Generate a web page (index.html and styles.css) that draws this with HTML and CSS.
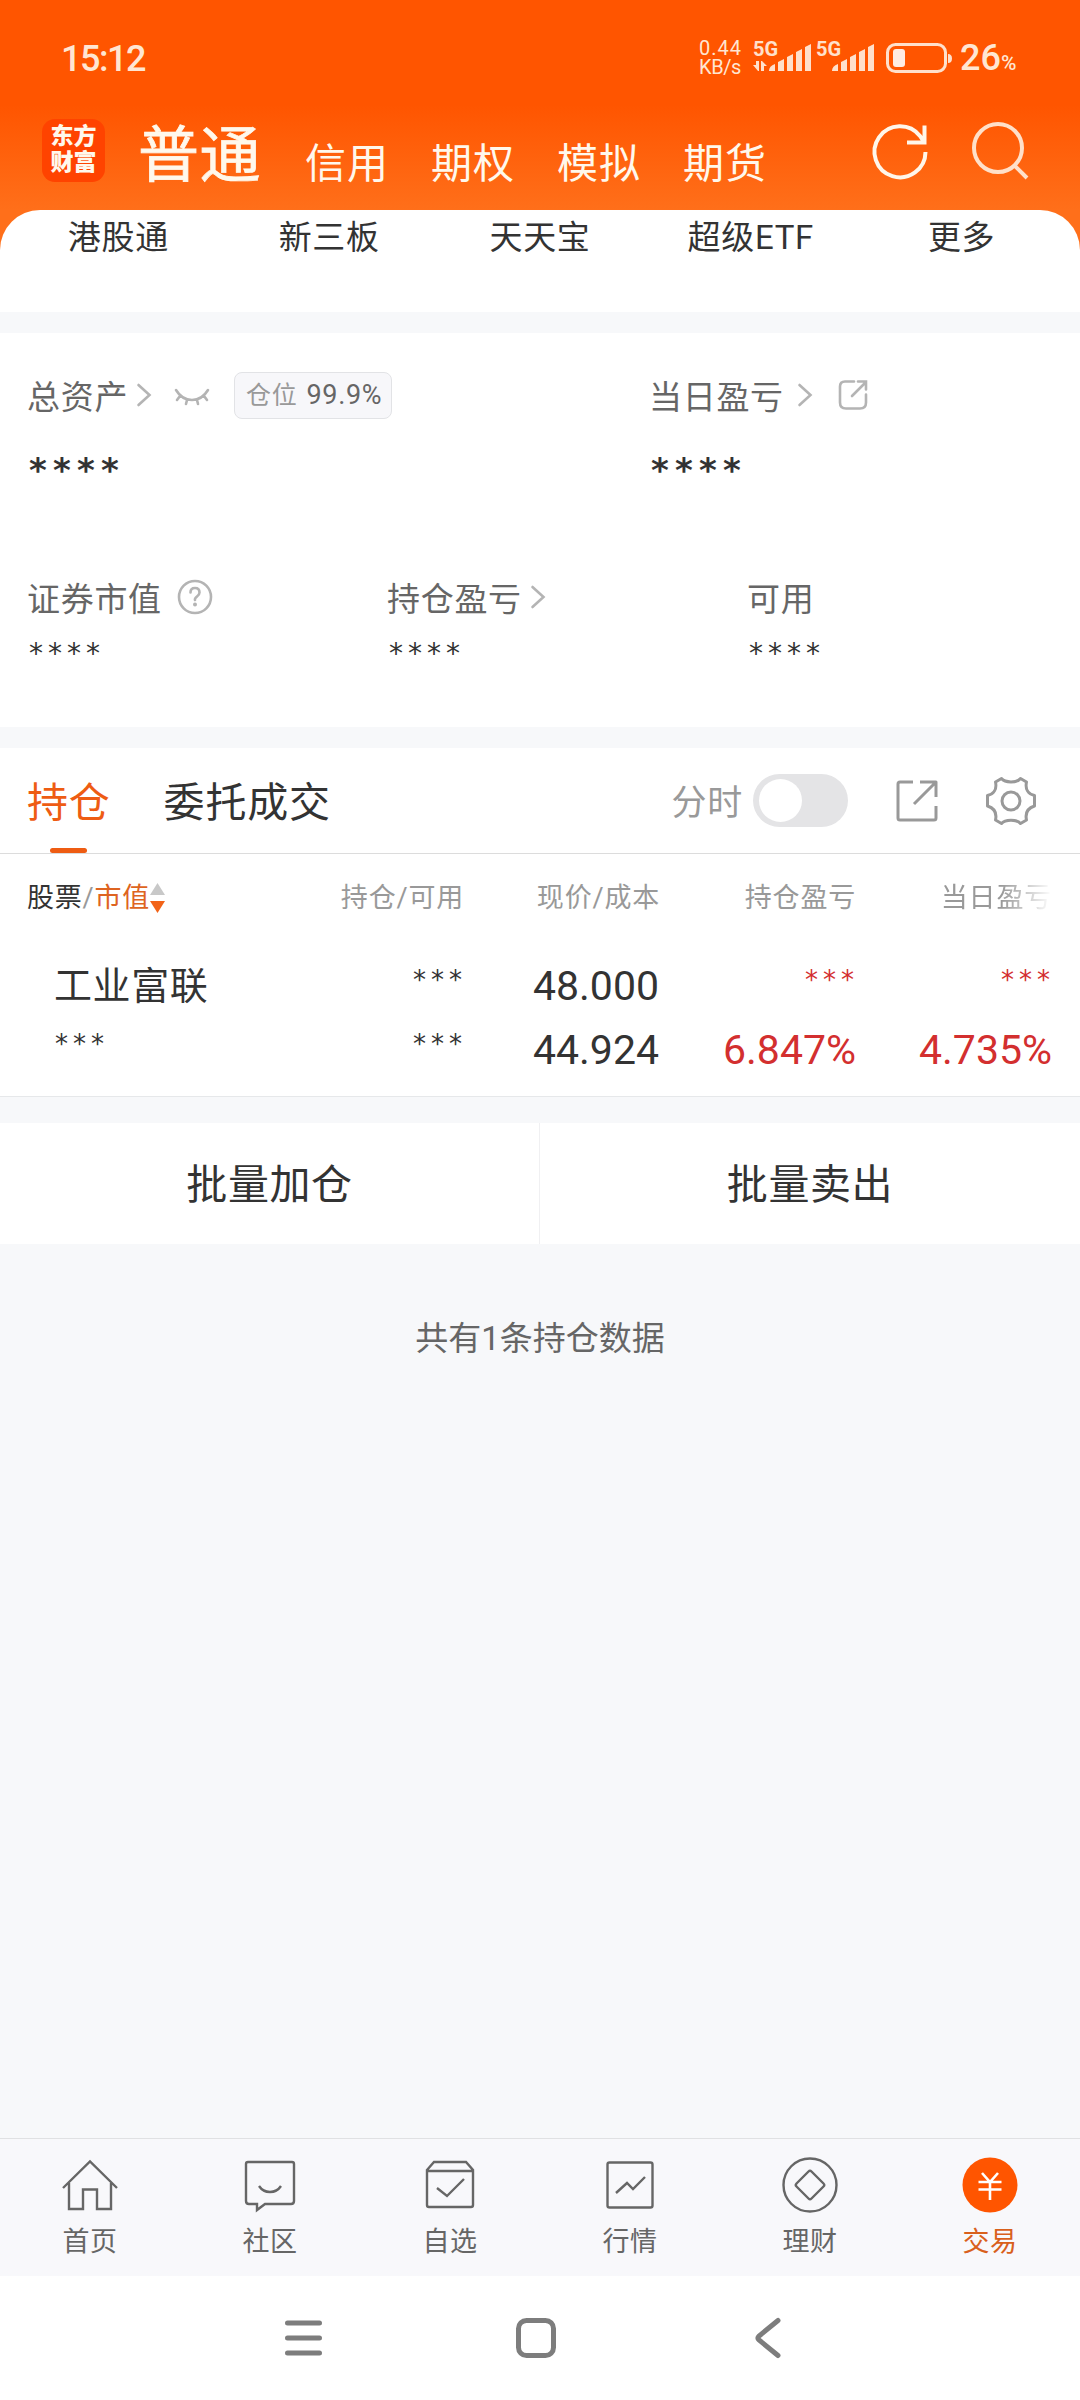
FILE: index.html
```html
<!DOCTYPE html>
<html lang="zh-CN">
<head>
    <meta charset="UTF-8">
    <meta name="viewport" content="width=device-width, initial-scale=1.0">
    <title>交易 - 持仓</title>
    <link rel="stylesheet" href="styles.css">
</head>
<body>
    <header class="header">
        <div class="status-bar">
            <span class="time">15:12</span>
            <div class="net-speed"><span>0.44</span><span>KB/s</span></div>
            <svg class="signal" width="126" height="32" viewBox="0 0 126 32">
                <g class="signal-label"><text x="0" y="14">5G</text><text x="63" y="14">5G</text></g>
                <path d="M6 19v10h-1l-5-6h3v-4zM8 29v-10h1l5 5h-3v5z"/>
                <path d="M16 29q0-5 6-7v7zM25 29v-9l6-3v12zM34 29v-14l6-3v17zM43 29v-19l6-3v22zM52 29v-24l6-3v27z"/>
                <path d="M79 29q0-5 6-7v7zM88 29v-9l6-3v12zM97 29v-14l6-3v17zM106 29v-19l6-3v22zM115 29v-24l6-3v27z"/>
            </svg>
            <svg class="battery" width="67" height="30" viewBox="0 0 67 30">
                <rect x="1.500" y="1.500" width="58" height="27" rx="8" fill="none" stroke="#ffe0cb" stroke-width="3"/>
                <rect x="7" y="6" width="12" height="18" rx="3" fill="#ffece2"/>
                <path d="M62 11q4 0 4 4.500t-4 4.500z" fill="#ffe0cb"/>
            </svg>
            <span class="percent">26<small>%</small></span>
        </div>
        <div class="nav-top">
            <div class="logo"><span>东方</span><span>财富</span></div>
            <span class="account active">普通</span>
            <span class="account">信用</span>
            <span class="account">期权</span>
            <span class="account">模拟</span>
            <span class="account">期货</span>
            <div class="nav-icons">
                <svg width="60" height="60" viewBox="0 0 60 60" fill="none" stroke="#fff6ea" stroke-width="4">
                    <path d="M55.500 30A25.500 25.500 0 1 1 50 14l4 6M54.500 3.500v17H37"/>
                </svg>
                <svg width="60" height="60" viewBox="0 0 60 60" fill="none" stroke="#ffe0c9" stroke-width="4">
                    <circle cx="28" cy="26" r="24"/>
                    <path d="M44 43l13 13"/>
                </svg>
            </div>
        </div>
    </header>

    <section class="shortcuts">
        <span>港股通</span>
        <span>新三板</span>
        <span>天天宝</span>
        <span>超级ETF</span>
        <span>更多</span>
    </section>

    <section class="assets">
        <div class="asset-row main">
            <div class="asset">
                <div class="asset-label">总资产
                    <svg class="chevron" width="14" height="24" viewBox="0 0 14 24"><path d="M1.500 2l11 10-11 10"/></svg>
                    <svg class="eye" width="36" height="18" viewBox="0 0 36 18"><path d="M2 2q6 10 16 10T34 2M6 8l-3 4M13 12l-1 4M23 12l1 4M30 8l3 4"/></svg>
                    <span class="badge">仓位 <b>99.9%</b></span>
                </div>
                <div class="mask">****</div>
            </div>
            <div class="asset">
                <div class="asset-label">当日盈亏
                    <svg class="chevron far" width="14" height="24" viewBox="0 0 14 24"><path d="M1.500 2l11 10-11 10"/></svg>
                    <svg class="share-small" width="30" height="30" viewBox="0 0 30 30"><path d="M16 1.500H7q-5 0-5 5v16q0 6 6 6h14q6 0 6-6v-8M20 1.500h8v8M28 2L14 16"/></svg>
                </div>
                <div class="mask">****</div>
            </div>
        </div>
        <div class="asset-row sub">
            <div class="asset">
                <div class="asset-label">证券市值
                    <svg class="help" width="36" height="36" viewBox="0 0 36 36">
                        <circle cx="18" cy="18" r="16"/>
                        <path d="M13.500 13.500q0-4.500 4.500-4.500t4.500 4.500q0 2-2.500 4T18 21"/>
                        <circle class="dot" cx="18" cy="25.500" r="2"/>
                    </svg>
                </div>
                <div class="mask">****</div>
            </div>
            <div class="asset">
                <div class="asset-label">持仓盈亏
                    <svg class="chevron" width="14" height="24" viewBox="0 0 14 24"><path d="M1.500 2l11 10-11 10"/></svg>
                </div>
                <div class="mask">****</div>
            </div>
            <div class="asset">
                <div class="asset-label">可用</div>
                <div class="mask">****</div>
            </div>
        </div>
    </section>

    <section class="positions">
        <div class="tabs">
            <span class="tab active">持仓</span>
            <span class="tab">委托成交</span>
            <div class="tools">
                <span>分时</span>
                <div class="switch"></div>
                <svg width="42" height="42" viewBox="0 0 42 42"><path d="M17 2H4q-2 0-2 2v34q0 2 2 2h34q2 0 2-2V26M24 2h16v15M40 2L18 24"/></svg>
                <svg class="gear" width="50" height="48" viewBox="0 0 50 48">
                    <path d="M15.500 1.500C19 6 31 6 34.500 1.500L40.500 5C39 12 42 17 48.500 18.500V29C42 31 39 36 40.500 43L34.500 46.500C31 42 19 42 15.500 46.500L9.500 43C11 36 8 31 1.500 29V18.500C8 17 11 12 9.500 5Z"/>
                    <circle cx="25" cy="24" r="9"/>
                </svg>
            </div>
        </div>
        <div class="grid head">
            <span class="first"><b>股票</b>/<em>市值</em><svg width="15" height="30" viewBox="0 0 15 30"><path d="M7.500 0l7.500 12H0z" fill="#c8c8c8"/><path d="M7.500 30L0 18h15z" fill="#f26318"/></svg></span>
            <span>持仓/可用</span>
            <span>现价/成本</span>
            <span>持仓盈亏</span>
            <span class="fade">当日盈亏</span>
        </div>
        <div class="grid stock">
            <div class="first"><span class="name">工业富联</span><span class="stars">***</span></div>
            <div><span class="stars">***</span><span class="stars">***</span></div>
            <div class="price"><span>48.000</span><span>44.924</span></div>
            <div class="up"><span class="stars">***</span><span>6.847%</span></div>
            <div class="up"><span class="stars">***</span><span>4.735%</span></div>
        </div>
    </section>

    <section class="actions">
        <span>批量加仓</span>
        <span>批量卖出</span>
    </section>
    <p class="total">共有1条持仓数据</p>

    <nav class="tabbar">
        <div class="item">
            <svg width="58" height="58" viewBox="0 0 58 58"><path d="M2 32L29 5.500 56 32M8 27v26h14V33.500h14V53h14V27"/></svg>
            <span>首页</span>
        </div>
        <div class="item">
            <svg width="58" height="58" viewBox="0 0 58 58"><path d="M7 6h44q2 0 2 2v37q0 3-3 3H24l-8 6v-6H8q-3 0-3-3V8q0-2 2-2zM18 30q4 6 11 6t11-6"/></svg>
            <span>社区</span>
        </div>
        <div class="item">
            <svg width="58" height="58" viewBox="0 0 58 58"><path d="M6 14l7-8h32l7 8v35q0 2-2 2H8q-2 0-2-2zM6 15h46M16 32l10 8 17-17"/></svg>
            <span>自选</span>
        </div>
        <div class="item">
            <svg width="58" height="58" viewBox="0 0 58 58"><rect x="6.500" y="6.500" width="45" height="45" rx="2"/><path d="M15 37l11-10 6 6 12-12"/></svg>
            <span>行情</span>
        </div>
        <div class="item">
            <svg width="58" height="58" viewBox="0 0 58 58"><circle cx="29" cy="29" r="26.500"/><path d="M27.500 15.500q1.500-1.500 3 0l12 12q1.500 1.500 0 3l-12 12q-1.500 1.500-3 0l-12-12q-1.500-1.500 0-3z"/></svg>
            <span>理财</span>
        </div>
        <div class="item active">
            <svg width="58" height="58" viewBox="0 0 58 58"><circle class="disc" cx="29" cy="29" r="27.500"/><path d="M21 17l8 9 8-9M29 26v18M17.500 26h23M17.500 33.500h23"/></svg>
            <span>交易</span>
        </div>
    </nav>
    <footer class="system-nav">
        <svg width="40" height="42" viewBox="0 0 40 42"><path d="M4.500 6h32M4.500 21h32M4.500 36h32"/></svg>
        <svg width="42" height="42" viewBox="0 0 42 42"><rect x="3.500" y="3.500" width="35" height="35" rx="8"/></svg>
        <svg width="40" height="42" viewBox="0 0 40 42"><path d="M29 3.500L10 19q-2 2 0 4l19 15.500"/></svg>
    </footer>
</body>
</html>
```
FILE: styles.css
```css
* {
    box-sizing: border-box;
}
body {
    margin: 0;
    width: 1080px;
    height: 2400px;
    display: flex;
    flex-direction: column;
    background: #f7f8fa;
    font-family: Roboto, "Noto Sans CJK SC", sans-serif;
    color: #333;
    overflow: hidden;
}
span, b, em {
    white-space: nowrap;
}
svg {
    flex: none;
    overflow: visible;
}
.header {
    height: 250px;
    flex: none;
    background: linear-gradient(#ff5500 105px, #ff6f1a 210px);
    color: #fff8ec;
}
/* status bar */
.status-bar {
    height: 116px;
    padding: 0 62px 0 61px;
    display: flex;
    align-items: center;
    color: #ffe6d2;
}
.time {
    font-size: 36px;
    font-weight: 500;
    letter-spacing: -1.5px;
    padding-top: 1px;
    margin-right: auto;
}
.net-speed {
    display: flex;
    flex-direction: column;
    font-size: 20px;
    line-height: 19px;
    width: 43px;
    margin-right: 11px;
}
.net-speed span:first-child {
    letter-spacing: 1px;
}
.net-speed span:last-child {
    letter-spacing: -0.4px;
}
.signal {
    fill: #ffe0cb;
}
.signal-label {
    font-size: 20px;
    font-weight: 700;
}
.battery {
    margin-left: 7px;
}
.percent {
    width: 58px;
    margin-left: 7px;
    font-size: 36px;
    font-weight: 500;
}
.percent small {
    font-size: 21px;
}
/* account switcher */
.nav-top {
    height: 94px;
    padding-left: 42px;
    display: flex;
    align-items: flex-start;
}
.logo {
    width: 63px;
    height: 63px;
    margin: 3px 34px 0 0;
    padding-top: 5px;
    border-radius: 13px;
    background: #ff4300;
    text-align: center;
    font-size: 23px;
    font-weight: 900;
    line-height: 26px;
    display: flex;
    flex-direction: column;
}
.account {
    width: 84px;
    margin-right: 42px;
    font-size: 41px;
    line-height: 60px;
    padding-top: 18px;
    letter-spacing: 1px;
}
.account.active {
    width: 124px;
    font-size: 61px;
    -webkit-text-stroke: 0.8px #fff8ec;
    letter-spacing: 0.5px;
    line-height: 64px;
    padding-top: 8px;
    margin-left: -1px;
    margin-right: 43px;
}
.nav-icons {
    display: flex;
    gap: 40px;
    margin: 6px 0 0 61px;
}
/* shortcut row */
.shortcuts {
    height: 102px;
    flex: none;
    margin-top: -40px;
    padding: 0 13px;
    background: #fff;
    border-radius: 40px 40px 0 0;
    display: grid;
    grid-template-columns: repeat(5, 1fr);
    text-align: center;
    font-size: 33px;
    line-height: 55px;
    letter-spacing: 0.7px;
}
/* assets */
.assets {
    height: 394px;
    flex: none;
    margin-top: 21px;
    padding: 37px 27px 0;
    background: #fff;
}
.asset-row {
    display: grid;
    height: 202px;
}
.asset-row.main {
    grid-template-columns: 622px 1fr;
}
.asset-row.sub {
    grid-template-columns: 360px 360px 1fr;
}
.asset-label {
    height: 50px;
    display: flex;
    align-items: center;
    color: #666;
    font-size: 33px;
    letter-spacing: 0.7px;
}
.asset-label svg {
    fill: none;
    stroke: #b4b4b4;
    stroke-width: 2.6;
    stroke-linecap: round;
}
.chevron {
    margin-left: 9px;
}
.chevron.far {
    margin-left: 14px;
}
.eye {
    margin: 3px 0 0 23px;
}
.share-small {
    margin-left: 26px;
}
.help {
    margin-left: 15px;
}
.help .dot {
    fill: #b4b4b4;
    stroke: none;
}
.badge {
    width: 158px;
    height: 47px;
    margin-left: 24px;
    padding-left: 11px;
    border: 1px solid #e2e3e6;
    border-radius: 8px;
    background: #f7f7fa;
    color: #999;
    font-size: 25px;
    line-height: 45px;
}
.badge b {
    color: #666;
    font-size: 27px;
    font-weight: 400;
    margin-left: 2px;
}
.mask {
    padding-left: 1px;
    font-family: "DejaVu Sans", sans-serif;
}
.main .mask {
    padding-left: 2px;
    font-size: 34px;
    font-weight: 700;
    letter-spacing: 6.2px;
    line-height: 56px;
    margin-top: 22px;
}
.sub .mask {
    padding-left: 2px;
    font-size: 28px;
    letter-spacing: 5px;
    line-height: 40px;
    margin-top: 12px;
}
/* positions */
.positions {
    height: 349px;
    flex: none;
    margin-top: 21px;
    background: #fff;
    border-bottom: 1px solid #e6e8ea;
}
.tabs {
    height: 106px;
    padding-left: 27px;
    display: flex;
    align-items: center;
    border-bottom: 1px solid #dcdcdc;
    font-size: 41px;
    letter-spacing: 0.8px;
}
.tab {
    position: relative;
    margin-right: 53px;
    padding-bottom: 4px;
}
.tab.active {
    color: #ee5c13;
}
.tab.active::after {
    content: "";
    position: absolute;
    left: 23px;
    bottom: -20px;
    width: 37px;
    height: 5px;
    border-radius: 3px;
    background: #ee5c13;
}
.tools {
    margin: 0 44px 0 auto;
    display: flex;
    align-items: center;
    color: #999;
    font-size: 35px;
}
.tools span {
    padding-bottom: 3px;
}
.tools svg {
    margin-left: 48px;
    fill: none;
    stroke: #999;
    stroke-width: 3;
    stroke-linejoin: round;
}
.switch {
    width: 95px;
    height: 53px;
    margin-left: 10px;
    padding: 5px 6px;
    border-radius: 27px;
    background: #e4e4e6;
}
.switch::before {
    content: "";
    display: block;
    width: 43px;
    height: 43px;
    border-radius: 50%;
    background: #fff;
}
.grid {
    display: grid;
    grid-template-columns: 247px 190px 196px 196px 196px;
    padding-left: 27px;
    text-align: right;
}
.grid .first {
    text-align: left;
}
.head {
    height: 86px;
    line-height: 88px;
    color: #999;
    font-size: 27px;
    letter-spacing: 0.8px;
}
.head .first {
    display: flex;
    align-items: center;
}
.head b {
    font-weight: 400;
    color: #333;
}
.head em {
    font-style: normal;
    color: #de6421;
}
.fade {
    -webkit-mask: linear-gradient(to right, #000 145px, transparent);
    mask: linear-gradient(to right, #000 145px, transparent);
}
.stock {
    padding-top: 14px;
    font-size: 41px;
}
.stock div {
    display: flex;
    flex-direction: column;
}
.stock span {
    height: 64px;
    line-height: 65px;
}
.stock .first {
    padding-left: 27px;
}
.stock .price {
    padding-right: 1px;
}
.stock .name {
    font-size: 38px;
    letter-spacing: 0.6px;
}
.stock .stars {
    margin-right: -3px;
    font-family: "DejaVu Sans", sans-serif;
    font-size: 26px;
    line-height: 53px;
    letter-spacing: 5px;
}
.stock .first .stars {
    padding-left: 1px;
}
.up {
    color: #d32f2f;
}
/* batch actions */
.actions {
    height: 121px;
    flex: none;
    margin-top: 26px;
    background: #fff;
    display: grid;
    grid-template-columns: 1fr 1fr;
    text-align: center;
    font-size: 41px;
    line-height: 125px;
    letter-spacing: 0.6px;
}
.actions span {
    height: 121px;
}
.actions span:first-child {
    border-right: 1px solid #f0f0f2;
}
.total {
    margin: 70px 0 0;
    text-align: center;
    color: #666;
    font-size: 33px;
    line-height: 50px;
}
/* bottom bars */
.tabbar {
    height: 138px;
    flex: none;
    margin-top: auto;
    border-top: 1px solid #e0e1e3;
    background: #f8f8fb;
    display: grid;
    grid-template-columns: repeat(6, 1fr);
}
.item {
    padding-top: 17px;
    display: flex;
    flex-direction: column;
    align-items: center;
    color: #666;
    font-size: 27px;
    line-height: 40px;
    letter-spacing: 0.5px;
}
.item svg {
    margin-bottom: 8px;
    fill: none;
    stroke: #666;
    stroke-width: 2.4;
}
.item.active {
    color: #d9601c;
}
.item.active svg {
    stroke: #fff;
    stroke-width: 2.6;
}
.item .disc {
    fill: #ff5500;
    stroke: none;
}
.system-nav {
    height: 124px;
    flex: none;
    padding-left: 283px;
    background: #fff;
    display: flex;
    align-items: center;
    gap: 192px;
}
.system-nav svg {
    fill: none;
    stroke: #7d7d7d;
    stroke-width: 5;
    stroke-linecap: round;
}
```
